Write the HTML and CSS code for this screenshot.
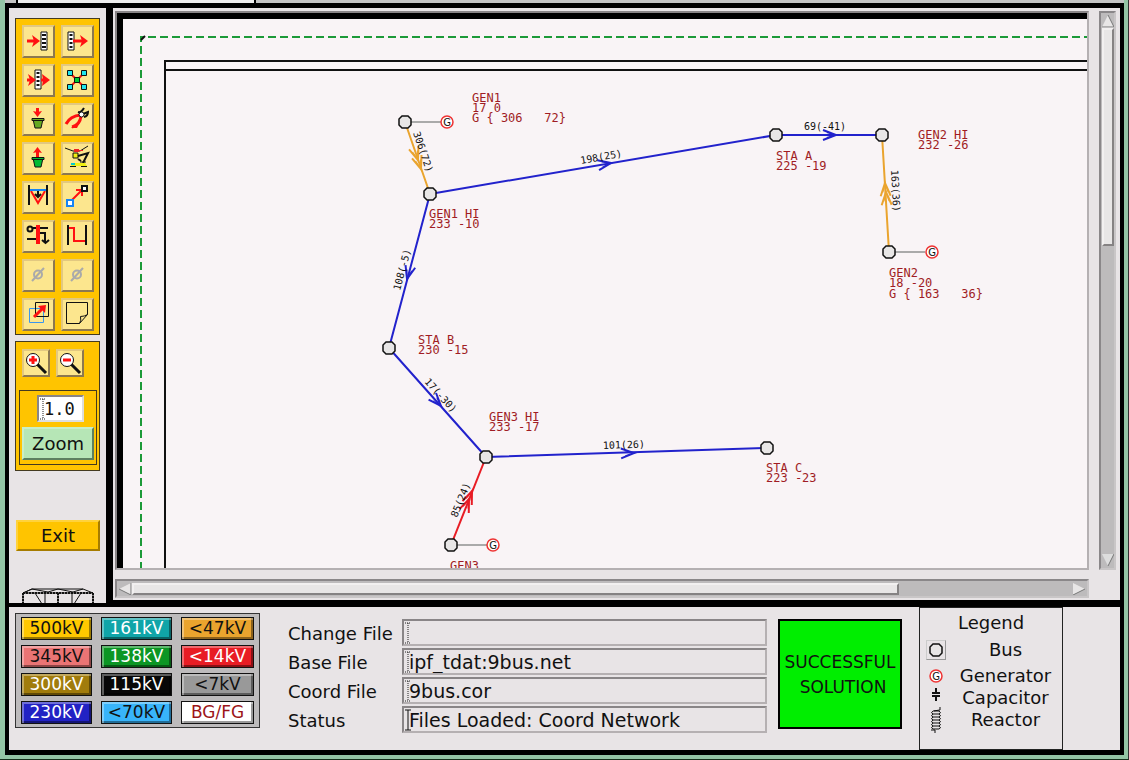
FILE: index.html
```html
<!DOCTYPE html>
<html lang="en">
<head>
<meta charset="utf-8">
<title>Network Editor</title>
<link rel="stylesheet" href="styles.css">
</head>
<body>
<div class="desktop">
<header class="menu-strip"><div class="menu-end"></div></header>
<div class="window">
<div class="workspace">
<aside class="sidebar">
<div class="tools">
<button class="tool" aria-label="Move into list"><svg viewBox="0 0 29 29"><path d="M3 14h9" class="r3"/><path d="M8 8l8 6-8 6 2-6z" fill="#f11"/><path d="M17 5h6v18h-6z" fill="#fff" class="k1"/><path d="M20 7v15" stroke="#111" stroke-width="4" stroke-dasharray="2 2"/></svg></button>
<button class="tool" aria-label="Move out of list"><svg viewBox="0 0 29 29"><path d="M5 5h6v18H5z" fill="#fff" class="k1"/><path d="M8 7v15" stroke="#111" stroke-width="3" stroke-dasharray="2 2"/><path d="M10 14h10" class="r3"/><path d="M17 8l8 6-8 6 2-6z" fill="#f11"/></svg></button>
<button class="tool" aria-label="Modify list"><svg viewBox="0 0 29 29"><path d="M11 4h6v19h-6z" fill="#fff" class="k1"/><path d="M14 6v16" stroke="#111" stroke-width="3" stroke-dasharray="2 2"/><path d="M3 14h6M17 14h4" class="r3"/><path d="M4 8l8 6-8 6 2-6zM18 8l8 6-8 6 1-6z" fill="#f11"/></svg></button>
<button class="tool" aria-label="Network"><svg viewBox="0 0 29 29"><path d="M7 7l14 14M21 7L7 21" class="r2"/><path d="M4.500 4.500h5v5h-5zM18.500 4.500h5v5h-5zM4.500 18.500h5v5h-5zM18.500 18.500h5v5h-5z" fill="#1fe5ee" class="k1"/><path d="M11.500 11.500h5v5h-5z" fill="#0c3" class="k1"/></svg></button>
<button class="tool" aria-label="Drop in bucket"><svg viewBox="0 0 29 29"><path d="M13.500 3v6" class="r3"/><path d="M9 6l4.500 6L18 6l-4.500 1z" fill="#f11"/><path d="M9 14h10l-2 9h-6z" fill="#6a2" class="k1"/><path d="M8 13.500h12v2H8z" class="k1" fill="#6a2"/></svg></button>
<button class="tool" aria-label="Cut"><svg viewBox="0 0 29 29"><path d="M3 19q4-8 15-9" class="r3"/><path d="M9 22q8-2 9-11" class="r3"/><path d="M8 23q4-4 8-4l-2 4z" fill="#f11"/><path d="M15 7q3 1 6-4M21 12q4-1 4-5l-5 2" class="k2"/><circle cx="18.500" cy="9.500" r="2.500" fill="#fff" class="k1"/></svg></button>
<button class="tool" aria-label="Take from bucket"><svg viewBox="0 0 29 29"><path d="M13.500 13V6" class="r3"/><path d="M9 9l4.500-6L18 9l-4.500-1z" fill="#f11"/><path d="M9 14h10l-2 9h-6z" fill="#0b3" class="k1"/><path d="M8 13.500h12v2H8z" class="k1" fill="#0b3"/></svg></button>
<button class="tool" aria-label="Line crew"><svg viewBox="0 0 29 29"><path d="M2 4l8 3h7l8-5" class="k1"/><path d="M11 5h5v3h-5zM16 6h4v1h-4z" fill="#e22"/><path d="M10 9h5v5h-5z" fill="#ee1" class="k1"/><path d="M15 12l10-3-5 10M15 15l3 2" class="k2"/><path d="M10 19h12l2 3H8z" fill="#ee1"/><path d="M7 22.500h6M18 22.500h6M17 18h6" class="k1"/><path d="M8 20h4" stroke="#0cc" stroke-width="2"/></svg></button>
<button class="tool" aria-label="Tap"><svg viewBox="0 0 29 29"><path d="M5 2v20M23 2v20" class="k2"/><path d="M7 8l7 12 7-12" class="r1"/><path d="M6 7h16" stroke="#1684f5" stroke-width="2"/><path d="M14 8v6M11 11l3 3 3-3" class="k2"/></svg></button>
<button class="tool" aria-label="Move bus"><svg viewBox="0 0 29 29"><path d="M9 17L19 7M13 7h6v6" class="r2"/><path d="M4 17h6v6H4z" fill="#fff" stroke="#1684f5" stroke-width="2"/><path d="M19 3h5v5h-5z" fill="#fff" class="k2"/></svg></button>
<button class="tool" aria-label="Switch line"><svg viewBox="0 0 29 29"><path d="M8 6h16M3 17h12M16 11h5v10M18 18l3.500 3 3.500-3" class="k2"/><circle cx="6" cy="7" r="2.500" class="k2"/><path d="M14 3v19" stroke="#f11" stroke-width="4"/></svg></button>
<button class="tool" aria-label="Bend line"><svg viewBox="0 0 29 29"><path d="M5 3v20M23 3v20" class="k2"/><path d="M6 6h5v13h11" class="r2"/></svg></button>
<button class="tool" aria-label="Unused tool" disabled><svg viewBox="0 0 29 29"><circle cx="14" cy="13.500" r="4" class="g2"/><path d="M8 20L20 7" class="g2"/></svg></button>
<button class="tool" aria-label="Unused tool two" disabled><svg viewBox="0 0 29 29"><circle cx="14" cy="13.500" r="4" class="g2"/><path d="M8 20L20 7" class="g2"/></svg></button>
<button class="tool" aria-label="Move area"><svg viewBox="0 0 29 29"><path d="M5.500 8.500h14v14h-14z" fill="none" stroke="#3a96ee"/><path d="M11.500 2.500h13v14h-13z" class="k1"/><path d="M10 17l9-9" class="r3"/><path d="M14 6l8-1-1 8z" fill="#f11"/></svg></button>
<button class="tool" aria-label="Note"><svg viewBox="0 0 29 29"><path d="M3.500 2.500h21v12l-8 9h-13zM16.500 23.500q2-3 1-7 4 0 7-2" class="k1"/></svg></button>
</div>
<form class="zoom">
<div class="zoom-icons">
<button type="button" class="tool small" aria-label="Zoom in"><svg viewBox="0 0 24 24"><path d="M13 13l9 9" class="k3"/><circle cx="9" cy="9" r="6.500" fill="#fff" class="k1"/><path d="M5 9h8M9 5v8" class="r3"/></svg></button>
<button type="button" class="tool small" aria-label="Zoom out"><svg viewBox="0 0 24 24"><path d="M13 13l9 9" class="k3"/><circle cx="9" cy="9" r="6.500" fill="#fff" class="k1"/><path d="M5 9h8" class="r3"/></svg></button>
</div>
<div class="zoom-box">
<div class="field factor"><svg class="caret" viewBox="0 0 6 22"><path d="M0 1h6M0 21h6M3 1v20" class="dots"/></svg><input type="text" value="1.0" aria-label="Zoom factor"></div>
<button type="button" class="zoom-go">Zoom</button>
</div>
</form>
<button class="exit">Exit</button>
<svg class="tower" viewBox="0 0 72 16"><path d="M1 5L10 1h51l10 4v11M1 16V5h70M1 5l9-4 16 3 10-3 15 3 10-3M13 5l7 11h3V5M36 5v11M59 5l-7 11h-2V5" class="k1"/><path d="M1 5h70M1 5v11M36 5v11M71 5v11" class="k2" stroke-dasharray="2 1"/></svg>
</aside>
<main class="editor">
<div class="viewport">
<svg class="diagram" role="img" aria-label="Nine bus network diagram">
<defs>
<g id="bus"><path d="M-3-6h6l3 3v6l-3 3h-6l-3-3v-6z"/></g>
<g id="gen"><circle r="6" fill="#fff" stroke="#e33" stroke-width="1.500"/><text class="g" x="0" y="4">G</text></g>
<path id="tip" d="M-13-5L0 0-13 5M-9-3L0 0-9 3"/>
</defs>
<g transform="translate(-123 -19)">
<path d="M3000 37H141V3000" class="limit"/>
<path d="M141 40l4-4" class="k2"/>
<path d="M3000 61H165V3000M165 70H3000" class="k2"/>
<g class="blue">
<path d="M430 194L776 135M776 135h106M430 194l-41 154M389 348l97 109M486 457l281-9"/>
<use href="#tip" transform="translate(611 163) rotate(-10)"/><use href="#tip" transform="translate(836 135)"/>
<use href="#tip" transform="translate(407 279) rotate(105)"/><use href="#tip" transform="translate(441 406) rotate(48)"/><use href="#tip" transform="translate(634 453) rotate(-2)"/>
</g>
<g class="orange"><path d="M405 122l25 72M882 135l7 117"/>
<use href="#tip" transform="translate(418 160) rotate(71)"/><use href="#tip" transform="translate(421 169) rotate(71)"/>
<use href="#tip" transform="translate(885 183) rotate(-93)"/><use href="#tip" transform="translate(886 192) rotate(-93)"/></g>
<g class="red"><path d="M451 545l35-88"/><use href="#tip" transform="translate(472 491) rotate(-68)"/><use href="#tip" transform="translate(469 499) rotate(-68)"/></g>
<path d="M405 122h36M889 252h36M451 545h36" class="g2"/>
<g class="buses"><use href="#bus" x="405" y="122"/><use href="#bus" x="430" y="194"/><use href="#bus" x="776" y="135"/><use href="#bus" x="882" y="135"/><use href="#bus" x="889" y="252"/><use href="#bus" x="389" y="348"/><use href="#bus" x="486" y="457"/><use href="#bus" x="767" y="448"/><use href="#bus" x="451" y="545"/></g>
<use href="#gen" x="447" y="122"/><use href="#gen" x="932" y="252"/><use href="#gen" x="493" y="545"/>
<g class="names">
<text x="472" y="102">GEN1</text><text x="472" y="112">17 0</text><text x="472" y="122">G { 306   72}</text>
<text x="429" y="218">GEN1 HI</text><text x="429" y="228">233 -10</text>
<text x="776" y="160">STA A</text><text x="776" y="170">225 -19</text>
<text x="918" y="139">GEN2 HI</text><text x="918" y="149">232 -26</text>
<text x="889" y="277">GEN2</text><text x="889" y="287">18 -20</text><text x="889" y="298">G { 163   36}</text>
<text x="418" y="344">STA B</text><text x="418" y="354">230 -15</text>
<text x="489" y="421">GEN3 HI</text><text x="489" y="431">233 -17</text>
<text x="766" y="472">STA C</text><text x="766" y="482">223 -23</text>
<text x="450" y="570">GEN3</text>
</g>
<g class="flows">
<text transform="translate(413 133) rotate(71)">306(72)</text>
<text transform="translate(581 164) rotate(-10)">198(25)</text>
<text transform="translate(804 130)">69(-41)</text>
<text transform="translate(891 170) rotate(87)">163(36)</text>
<text transform="translate(400 291) rotate(-75)">108(-5)</text>
<text transform="translate(424 382) rotate(48)">17(-30)</text>
<text transform="translate(603 449) rotate(-2)">101(26)</text>
<text transform="translate(457 518) rotate(-68)">85(24)</text>
</g>
</g>
</svg>
</div>
<div class="bar vertical"><svg class="arrow" viewBox="0 0 12 12"><path d="M6 0l6 12H0z" fill="#e8e6e6"/><path d="M6 0l6 12H0" class="shade"/></svg><div class="thumb"></div><div class="trough"></div><svg class="arrow" viewBox="0 0 12 12"><path d="M0 0h12L6 12z" fill="#ddd"/><path d="M12 0L6 12" class="shade"/></svg></div>
<div class="bar horizontal"><svg class="arrow" viewBox="0 0 12 12"><path d="M0 6l12-6v12z" fill="#e8e6e6"/><path d="M0 6l12 6V0" class="shade"/></svg><div class="thumb"></div><div class="trough"></div><svg class="arrow" viewBox="0 0 12 12"><path d="M0 0v12l12-6z" fill="#e8e6e6"/><path d="M0 12l12-6" class="shade"/></svg></div>
</main>
</div>
<footer class="status">
<div class="swatches">
<button class="kv c500">500kV</button><button class="kv c161">161kV</button><button class="kv c47">&lt;47kV</button>
<button class="kv c345">345kV</button><button class="kv c138">138kV</button><button class="kv c14">&lt;14kV</button>
<button class="kv c300">300kV</button><button class="kv c115">115kV</button><button class="kv c7">&lt;7kV</button>
<button class="kv c230">230kV</button><button class="kv c70">&lt;70kV</button><button class="kv cbg">BG/FG</button>
</div>
<form class="files">
<label for="change">Change File</label><div class="field"><svg class="caret" viewBox="0 0 6 22"><path d="M0 1h6M0 21h6M3 1v20" class="dots"/></svg><input id="change" type="text" value=""></div>
<label for="base">Base File</label><div class="field"><svg class="caret" viewBox="0 0 6 22"><path d="M0 1h6M0 21h6M3 1v20" class="dots"/></svg><input id="base" type="text" value="ipf_tdat:9bus.net"></div>
<label for="coord">Coord File</label><div class="field"><svg class="caret" viewBox="0 0 6 22"><path d="M0 1h6M0 21h6M3 1v20" class="dots"/></svg><input id="coord" type="text" value="9bus.cor"></div>
<label for="state">Status</label><div class="field"><svg class="caret" viewBox="0 0 6 22"><path d="M0 1h6M0 21h6M3 1v20" class="k1"/></svg><input id="state" type="text" value="Files Loaded: Coord Network"></div>
</form>
<div class="result"><span>SUCCESSFUL</span><span class="second">SOLUTION</span></div>
<section class="legend">
<h2>Legend</h2>
<div class="key bus-key"><span class="bus-frame"><svg viewBox="-8 -8 16 16"><path d="M-3-6h6l3 3v6l-3 3h-6l-3-3v-6z" class="bus-mark"/></svg></span><span>Bus</span></div>
<div class="key gen-key"><svg viewBox="-8 -8 16 16"><circle r="6" fill="#fff" stroke="#e33" stroke-width="1.500"/><text class="g" x="0" y="4">G</text></svg><span>Generator</span></div>
<div class="key cap-key"><svg viewBox="0 3 16 16"><path d="M8 1v5M4 6h8M4 9h8M8 9v5" class="k2"/></svg><span>Capacitor</span></div>
<div class="key coil-key"><svg class="coil" viewBox="0 0 16 28"><path d="M12 1v3L5 5q-3 2 0 3h6q3-1 0-3H6M5 8q-3 2 0 3h6q3-1 0-3M5 11q-3 2 0 3h6q3-1 0-3M5 14q-3 2 0 3h6q3-1 0-3M5 17q-3 2 0 3h6q3-1 0-3M5 20q-3 2 0 3h6q3-1 0-3M3 24h4v3" class="k1"/></svg><span>Reactor</span></div>
</section>
</footer>
</div>
</div>
</body>
</html>
```
FILE: styles.css
```css
* { box-sizing: border-box; }
body { margin: 0; font: 18px/20px "DejaVu Sans", Verdana, sans-serif; color: #111; }
button, input { font: inherit; color: inherit; margin: 0; padding: 0; border-radius: 0; }
svg { display: block; flex: none; }
h2 { margin: 0; font: inherit; }

.desktop { height: 100vh; display: flex; flex-direction: column; background: #94c5a5; border-bottom: 1px solid #16301c; border-right: 1px solid #333; padding: 0 4px 4px 5px; }
.menu-strip { height: 3px; flex: none; background: #c4c4c4; padding-left: 11px; }
.menu-end { width: 240px; height: 3px; background: #eee; border: solid #000; border-width: 0 2px; }
.window { flex: 1; min-height: 0; display: flex; flex-direction: column; background: #000; padding: 5px 4px; }
.workspace { flex: 1; min-height: 0; display: flex; gap: 7px; }

.sidebar { width: 97px; flex: none; background: #e8e4e6; padding: 10px 6px 0; display: flex; flex-direction: column; align-items: stretch; overflow: hidden; margin-bottom: 4px; }
.tools { display: grid; grid-template-columns: 33px 33px; gap: 6px; padding: 6px 5px 3px 6px; background: #ffc400; border: 1px solid #443b20; }
.tool { width: 33px; height: 33px; background: #fce68e; border: 2px solid; border-color: #e2c880 #8c7850 #8c7850 #e2c880; display: grid; place-items: center; }
.tool svg { width: 29px; height: 29px; }
.tool.small { width: 28px; height: 28px; }
.small svg { width: 24px; height: 24px; }
.zoom { margin-top: 6px; background: #ffc400; border: 1px solid #443b20; padding: 7px 2px 5px 3px; }
.zoom-icons { display: flex; gap: 6px; padding-left: 3px; margin-bottom: 13px; }
.zoom-box { border: 1px solid #443b20; padding: 4px 2px; display: flex; flex-direction: column; gap: 5px; }
.field { display: flex; align-items: center; min-width: 0; border: 2px solid; border-color: #898587 #b5b0b2 #b5b0b2 #898587; height: 27px; padding-left: 1px; font-size: 19px; }
.field input { flex: 1; min-width: 0; width: 0; height: 100%; border: 0; outline: 0; background: transparent; }
.caret { width: 6px; height: 22px; margin-right: -2px; }
.factor { width: 47px; background: #fff; margin-left: 15px; font-family: "DejaVu Sans Mono", monospace; font-size: 17px; border-right-color: #ddd; border-bottom-color: #ddd; }
.zoom-go { height: 33px; background: #b6e6b6; border: 2px solid; border-color: #c8eec8 #5c8060 #5c8060 #c8eec8; }
.exit { margin: 49px 0 0 1px; height: 31px; flex: none; background: #ffc400; border: 2px solid; border-color: #ffd23c #a67c00 #a67c00 #ffd23c; }
.tower { width: 72px; height: 16px; margin: 37px 0 0 7px; }

.editor { flex: 1; min-width: 0; background: #e8e4e6; display: grid; grid-template-columns: minmax(0, 1fr) 17px; grid-template-rows: minmax(0, 1fr) 19px; column-gap: 10px; row-gap: 9px; padding: 3px 4px 2px 2px; margin-bottom: 7px; }
.viewport { background: #f9f4f6; border: 2px solid; border-color: #898587 #b5b0b2 #b5b0b2 #898587; overflow: hidden; display: flex; }
.diagram { flex: 1; width: 100%; height: 100%; border: solid #000; border-width: 6px 0 0 6px; }
.bar { background: #bdbbbc; border: 2px solid; border-color: #8a8789 #c9c6c7 #c9c6c7 #8a8789; display: flex; align-items: center; min-width: 0; min-height: 0; padding: 1px; }
.vertical { flex-direction: column; }
.arrow { width: 12px; height: 12px; margin: 1px; }
.thumb { background: #e8e6e6; border: 2px solid; border-color: #f2f0f0 #858283 #858283 #f2f0f0; }
.vertical .thumb { width: 12px; flex: 41 1 0; }
.vertical .trough { flex: 59 1 0; }
.horizontal .thumb { height: 12px; flex: 163 1 0; }
.horizontal .trough { flex: 37 1 0; }

.status { flex: none; background: #e8e4e6; display: flex; align-items: flex-start; min-height: 143px; padding-left: 6px; }
.swatches { display: grid; grid-template-columns: 71px 71px 73px; gap: 5px 9px; padding: 3px 5px; margin-top: 6px; background: #bdbbbc; border: 1px solid #333; }
.kv { height: 23px; padding: 0; line-height: 17px; font-size: 17px; border: 1px solid #111; box-shadow: inset 2px 2px 0 rgba(255,255,255,.35), inset -2px -2px 0 rgba(0,0,0,.4); white-space: nowrap; }
.c500 { background: #ffc800; } .c161 { background: #10a5a8; color: #fff; } .c47 { background: #eaa42e; }
.c345 { background: #ea7474; } .c138 { background: #0c9624; color: #fff; } .c14 { background: #e81c24; color: #fff; }
.c300 { background: #a17c0c; color: #fff; } .c115 { background: #080808; color: #fff; } .c7 { background: #999; }
.c230 { background: #2222c4; color: #fff; } .c70 { background: #38b4fa; } .cbg { background: #fff; color: #9c1418; }
.files { flex: 1; min-width: 0; display: grid; grid-template-columns: 114px minmax(0, 1fr); gap: 2px 0; align-items: center; margin: 12px 11px 0 28px; }
.files label { white-space: nowrap; padding-top: 2px; }
.result { width: 124px; height: 110px; flex: none; margin: 12px 17px 0 0; background: #00ee00; border: 2px solid #000; display: flex; flex-direction: column; justify-content: center; align-items: center; gap: 5px; font-size: 17px; }
.second { padding-left: 6px; }
.legend { width: 144px; flex: none; align-self: stretch; border: 1px solid #222; margin-right: 57px; padding: 5px 6px 0 6px; }
.legend h2 { text-align: center; height: 24px; }
.key { display: grid; grid-template-columns: 20px 1fr; column-gap: 9px; justify-items: center; align-items: center; }
.key svg { width: 16px; height: 16px; overflow: visible; }
.key .coil { height: 28px; }
.bus-key { height: 26px; }
.gen-key { height: 25px; }
.cap-key { height: 18px; }
.coil-key { height: 26px; }
.bus-frame { width: 20px; height: 20px; border: 1px solid; border-color: #ccc #999 #999 #ccc; display: grid; place-items: center; }

.k1 { stroke: #111; stroke-width: 1; }
.k1:not([fill]) { fill: none; }
.k2 { stroke: #111; stroke-width: 2; }
.k2:not([fill]) { fill: none; }
.k3 { stroke: #111; stroke-width: 3; }
.r1 { stroke: #f11; stroke-width: 2; fill: none; }
.r2 { stroke: #f11; stroke-width: 2; fill: none; }
.r3 { stroke: #f11; stroke-width: 3; fill: none; }
.g2 { stroke: #aaa; stroke-width: 2; fill: none; }
.dots { stroke: #222; stroke-dasharray: 1 1; fill: none; }
.shade { stroke: #777; fill: none; }
.limit { stroke: #1c9a38; stroke-width: 2; stroke-dasharray: 8 4; fill: none; }
.blue, .orange, .red { stroke-width: 2; fill: none; }
.blue { stroke: #2222cc; }
.orange { stroke: #eaa42e; }
.red { stroke: #e81c24; }
.buses, .bus-mark { fill: #e8e6e6; stroke: #111; stroke-width: 1.5; }
.names { fill: #a01c24; font: 12px "DejaVu Sans Mono", monospace; }
.names text { white-space: pre; }
.flows { fill: #111; font: 10px "DejaVu Sans Mono", monospace; }
.g { fill: #111; font: 10px "DejaVu Sans", sans-serif; text-anchor: middle; }
```
